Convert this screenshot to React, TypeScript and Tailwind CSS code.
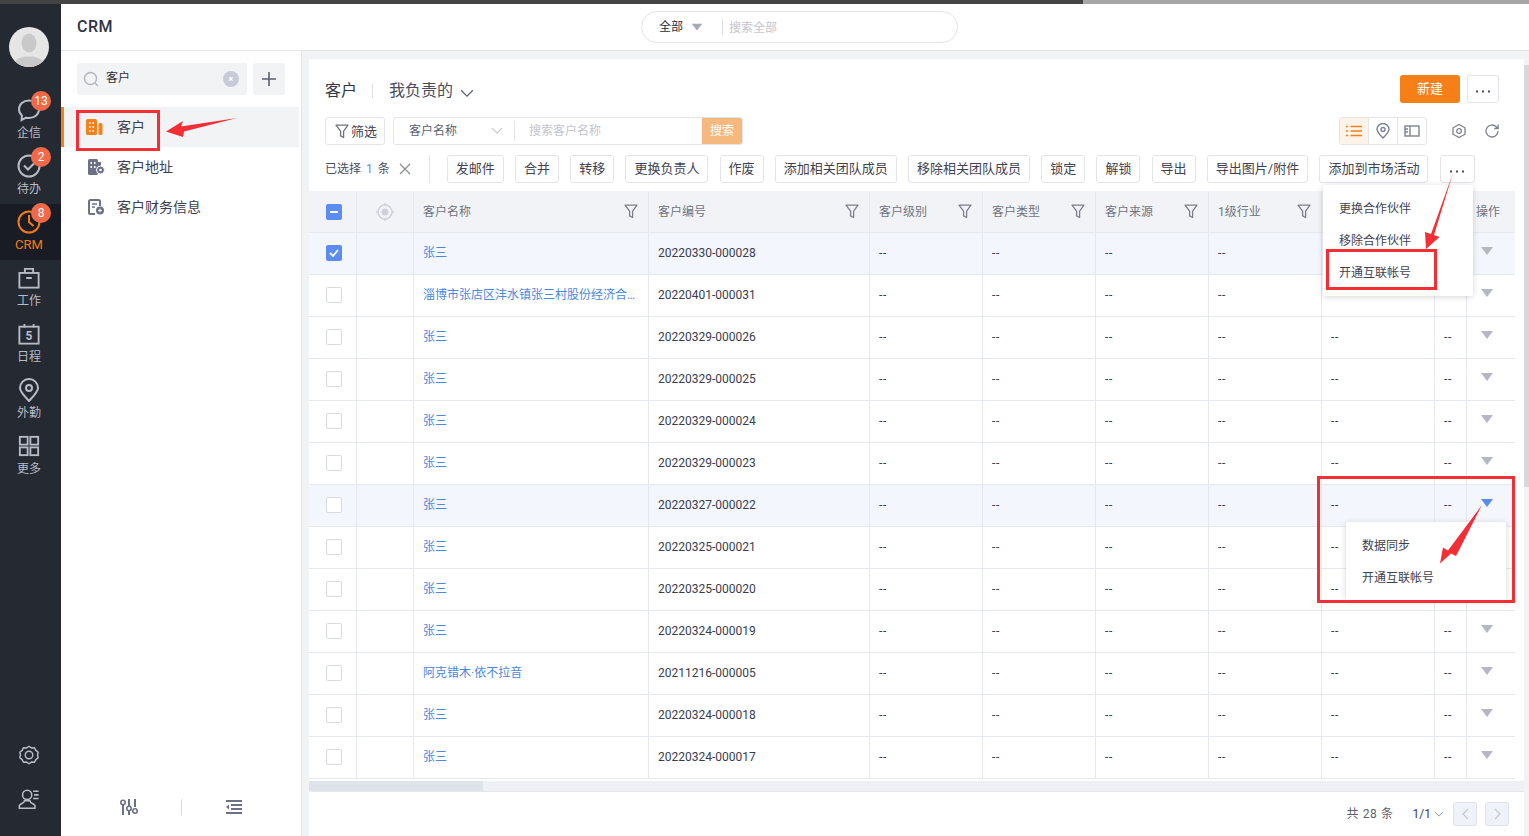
import React from "react";

const FONT = 'Roboto, "Noto Sans CJK SC", sans-serif';

function S({ size = 24, children, className = "" }: { size?: number; children: React.ReactNode; className?: string }) {
  return (
    <svg width={size} height={size} viewBox="0 0 24 24" fill="none" stroke="currentColor" strokeWidth={2} className={`shrink-0 ${className}`}>
      {children}
    </svg>
  );
}

function Filter({ className = "" }: { className?: string }) {
  return (
    <svg width="14" height="15" viewBox="0 0 14 15" fill="none" stroke="currentColor" strokeWidth="1.300" strokeLinejoin="round" className={`shrink-0 ${className}`}>
      <path d="M1 1.200h12L8.600 7.200v6.300l-3-1.600V7.200z" />
    </svg>
  );
}

function Chevron({ w = 12, className = "" }: { w?: number; className?: string }) {
  return (
    <svg width={w} height={w * 0.6} viewBox="0 0 12 7" fill="none" stroke="currentColor" strokeWidth="1.100" className={`shrink-0 ${className}`}>
      <path d="M1 1l5 5 5-5" />
    </svg>
  );
}

function Tri({ className = "" }: { className?: string }) {
  return (
    <svg width="12" height="8" viewBox="0 0 12 8" className={`shrink-0 ${className}`}>
      <path d="M0 0h12L6 8z" fill="currentColor" />
    </svg>
  );
}

function Dots() {
  return (
    <svg width="14" height="3" viewBox="0 0 14 3" fill="#4a4d5e" className="mt-[5px]">
      <rect x="0" y="0.500" width="2" height="2" />
      <rect x="6" y="0.500" width="2" height="2" />
      <rect x="12" y="0.500" width="2" height="2" />
    </svg>
  );
}

const navs: { label: string; badge?: string; icon: React.ReactNode; active?: boolean }[] = [
  {
    label: "企信",
    badge: "13",
    icon: (
      <S>
        <path d="M12 2.500c5.800 0 10 3.900 10 8.800s-4.200 8.800-10 8.800c-1 0-2-.1-2.900-.4L4.600 22l.3-4.600C3 15.800 2 13.700 2 11.300 2 6.400 6.200 2.500 12 2.500z" />
      </S>
    ),
  },
  {
    label: "待办",
    badge: "2",
    icon: (
      <S>
        <circle cx="12" cy="12" r="10.500" />
        <path d="M7 11.500l4 4 6-6" />
      </S>
    ),
  },
  {
    label: "CRM",
    badge: "8",
    active: true,
    icon: (
      <S>
        <circle cx="12" cy="12" r="10.500" />
        <path d="M12 5v7l4.500 4" />
      </S>
    ),
  },
  {
    label: "工作",
    icon: (
      <S size={22}>
        <rect x="1.500" y="6.500" width="21" height="16" />
        <path d="M7.500 6.500V2h9v4.500M9 12h6" />
      </S>
    ),
  },
  {
    label: "日程",
    icon: (
      <S size={22}>
        <rect x="1.500" y="4" width="21" height="18.500" />
        <path d="M7 1v4M17 1v4" />
        <text x="12" y="18.500" fontSize="13" fontWeight="700" fill="currentColor" stroke="none" textAnchor="middle">5</text>
      </S>
    ),
  },
  {
    label: "外勤",
    icon: (
      <S>
        <path d="M12 23C6.500 17 3 13.800 3 10a9 9 0 0118 0c0 3.800-3.500 7-9 13z" />
        <circle cx="12" cy="10" r="3" />
      </S>
    ),
  },
  {
    label: "更多",
    icon: (
      <S size={22}>
        <rect x="2" y="2" width="8.500" height="8.500" />
        <rect x="13.500" y="2" width="8.500" height="8.500" />
        <rect x="2" y="13.500" width="8.500" height="8.500" />
        <rect x="13.500" y="13.500" width="8.500" height="8.500" />
      </S>
    ),
  },
];

function NavRail() {
  return (
    <div className="flex w-[61px] shrink-0 flex-col items-center bg-[#252932]">
      <div className="mt-[23px] mb-[25px] mr-[3px] h-10 w-10 overflow-hidden rounded-full bg-[#e6e6e6]">
        <svg viewBox="0 0 40 40" width="40" height="40">
          <ellipse cx="20" cy="16" rx="7.500" ry="9.500" fill="#c9c9c9" />
          <path d="M3 40c1-8 8-8.500 12-10.500h10c4 2 11 2.500 12 10.500z" fill="#c9c9c9" />
        </svg>
      </div>
      {navs.map((n) => (
        <div
          key={n.label}
          className={`relative flex h-14 w-full flex-col items-center pr-[3px] pt-[6px] leading-[16px] ${n.active ? "bg-[#191c24] text-[13px] text-[#f47a12]" : "text-[12px] text-[#b8bcc6]"}`}
        >
          <span className="flex h-6 items-center">{n.icon}</span>
          <span className="mt-[3px]">{n.label}</span>
          {n.badge && (
            <span className="absolute left-[31px] top-[-1px] flex h-5 w-5 items-center justify-center rounded-full bg-[#f2694a] text-[12px] text-white">
              {n.badge}
            </span>
          )}
        </div>
      ))}
      <div className="mt-auto mr-[3px] flex flex-col items-center gap-[23px] pb-[26px] text-[#b8bcc6]">
        <S size={20}>
          <path d="M12 1.500l3 2 3.500-.2 1.800 3.200 2.700 2.200-.8 3.300.8 3.300-2.700 2.200-1.800 3.200-3.500-.2-3 2-3-2-3.500.2-1.800-3.200L1 15.300 1.800 12 1 8.700l2.700-2.200 1.800-3.200L9 3.500z" strokeWidth="1.700" />
          <circle cx="12" cy="12" r="4.500" strokeWidth="1.700" />
        </S>
        <S size={22}>
          <circle cx="10" cy="7.500" r="5" strokeWidth="1.700" />
          <path d="M1.500 22v-3c2-2.500 5-2 5.500-5h6c.5 3 3.500 2.500 5.500 5v3z" strokeWidth="1.700" />
          <path d="M16.500 3.500h6M17.500 7.500h5M16.500 11.500h6" strokeWidth="1.700" />
        </S>
      </div>
    </div>
  );
}

function Sidebar() {
  return (
    <div className="flex w-[241px] shrink-0 flex-col border-r border-[#e3e5ea] bg-white">
      <div className="flex items-center gap-[6px] pt-[12px] pl-4">
        <div className="flex h-8 w-[170px] items-center rounded-[3px] bg-[#f2f3f5] pl-[6px] pr-2">
          <svg width="16" height="16" viewBox="0 0 16 16" fill="none" stroke="#b4b7c2" strokeWidth="1.500">
            <circle cx="7.500" cy="7.500" r="6" />
            <path d="M12 12l3 3" />
          </svg>
          <span className="ml-[7px] mt-[-3px] text-[12px] text-[#2b2e3b]">客户</span>
          <span className="ml-auto flex h-4 w-4 items-center justify-center rounded-full bg-[#c5cbd9] text-[9px] leading-none font-bold text-white">×</span>
        </div>
        <div className="flex h-8 w-8 items-center justify-center rounded-[3px] bg-[#f2f3f5]">
          <svg width="16" height="16" viewBox="0 0 16 16" stroke="#5a5e70" strokeWidth="1.600">
            <path d="M8 1v14M1 8h14" />
          </svg>
        </div>
      </div>
      <div className="mt-3 flex h-10 w-[238px] items-center border-l-[3px] border-[#f6811a] bg-[#f2f3f5] pl-[22px] text-[14px] text-[#3b3e4e]">
        <svg width="17" height="16" viewBox="0 0 17 16" className="shrink-0">
          <rect x="0" y="0" width="11" height="16" rx="1.500" fill="#f6811a" />
          <rect x="12.500" y="4" width="4" height="12" rx="1.500" fill="#f6811a" />
          <path d="M3 3h1.500v2H3zM6.500 3H8v2H6.500zM3 7h1.500v2H3zM6.500 7H8v2H6.500zM3 11h1.500v2H3zM6.500 11H8v2H6.500z" fill="#fff" />
        </svg>
        <span className="ml-[14px] mt-[1px]">客户</span>
      </div>
      <div className="flex h-10 items-center pl-[27px] text-[14px] text-[#3b3e4e]">
        <svg width="17" height="16" viewBox="0 0 17 16" className="shrink-0">
          <rect x="0" y="0" width="10" height="16" rx="1.500" fill="#6d7186" />
          <path d="M2.500 3H4v2H2.500zM6 3h1.500v2H6zM2.500 7H4v2H2.500zM6 7h1.500v2H6z" fill="#fff" />
          <rect x="9" y="3" width="4" height="6" fill="#6d7186" />
          <circle cx="12.500" cy="11" r="4" fill="#6d7186" stroke="#fff" />
          <circle cx="12.500" cy="11" r="1.300" fill="#fff" />
        </svg>
        <span className="ml-[12px]">客户地址</span>
      </div>
      <div className="flex h-10 items-center pl-[27px] text-[14px] text-[#3b3e4e]">
        <svg width="17" height="16" viewBox="0 0 17 16" fill="none" className="shrink-0">
          <path d="M7 15H2.500A1.500 1.500 0 011 13.500v-11A1.500 1.500 0 012.500 1h8A1.500 1.500 0 0112 2.500V7" stroke="#6d7186" strokeWidth="2" />
          <path d="M4 5h5M4 8h3" stroke="#6d7186" strokeWidth="1.500" />
          <circle cx="12" cy="11.500" r="4" fill="#6d7186" />
          <path d="M10 11.500h4M12 9.500v4" stroke="#fff" />
        </svg>
        <span className="ml-[12px]">客户财务信息</span>
      </div>
      <div className="mt-auto flex items-center pb-[21px] pl-[59px] text-[#6d7186]">
        <svg width="18" height="16" viewBox="0 0 18 16" fill="none" stroke="currentColor" strokeWidth="2">
          <path d="M3 6v10M9 0v7M9 12v4M15 0v8" />
          <circle cx="3" cy="3.500" r="2.200" strokeWidth="1.600" />
          <circle cx="9" cy="9.500" r="2.200" strokeWidth="1.600" />
          <circle cx="15" cy="12" r="2.200" strokeWidth="1.600" />
        </svg>
        <span className="ml-[43px] h-4 w-px bg-[#d9dbe0]" />
        <svg width="16" height="14" viewBox="0 0 16 14" fill="currentColor" className="ml-[44px]">
          <path d="M0 0h16v2H0zM5 4h11v2H5zM5 8h11v2H5zM0 12h16v2H0zM3 4.500v5L0 7z" />
        </svg>
      </div>
    </div>
  );
}

const actions = ["发邮件", "合并", "转移", "更换负责人", "作废", "添加相关团队成员", "移除相关团队成员", "锁定", "解锁", "导出", "导出图片/附件", "添加到市场活动"];

const rows = [
  ["张三", "20220330-000028"],
  ["淄博市张店区沣水镇张三村股份经济合作社", "20220401-000031"],
  ["张三", "20220329-000026"],
  ["张三", "20220329-000025"],
  ["张三", "20220329-000024"],
  ["张三", "20220329-000023"],
  ["张三", "20220327-000022"],
  ["张三", "20220325-000021"],
  ["张三", "20220325-000020"],
  ["张三", "20220324-000019"],
  ["阿克错木·依不拉音", "20211216-000005"],
  ["张三", "20220324-000018"],
  ["张三", "20220324-000017"],
];

const widths = [48, 57, 235, 221, 113, 113, 113, 113, 113, 32, 48];
const heads = ["客户名称", "客户编号", "客户级别", "客户类型", "客户来源", "1级行业", "", ""];

function Table() {
  const th = "border-r border-b border-[#e6e8f0] bg-[#f1f3f6] px-[9px] text-left font-normal text-[#70737f]";
  const td = "border-r border-b border-[#e6e8f0] px-[9px] pb-[2px]";
  return (
    <table className="w-[1206px] table-fixed border-separate border-spacing-0 text-[12px] text-[#3a3d4d]">
      <colgroup>
        {widths.map((w, i) => (
          <col key={i} style={{ width: w }} />
        ))}
      </colgroup>
      <thead>
        <tr className="h-[42px]">
          <th className={th}>
            <span className="ml-[8px] flex h-4 w-4 items-center justify-center rounded-[2px] bg-[#5d8cf0]">
              <span className="h-[2px] w-2 bg-white" />
            </span>
          </th>
          <th className={th}>
            <svg width="18" height="18" viewBox="0 0 18 18" fill="none" className="mx-auto">
              <circle cx="9" cy="9" r="7" stroke="#ced1d8" strokeWidth="1.500" />
              <circle cx="9" cy="9" r="3.500" fill="#ced1d8" />
              <path d="M9 0v2M9 16v2M0 9h2M16 9h2" stroke="#ced1d8" strokeWidth="1.500" />
            </svg>
          </th>
          {heads.map((h, i) => (
            <th key={i} className={th}>
              <div className="flex items-center justify-between pr-[1px]">
                <span>{h}</span>
                {i < 6 && <Filter className="text-[#7d808d]" />}
              </div>
            </th>
          ))}
          <th className={`${th} border-r-0`}>操作</th>
        </tr>
      </thead>
      <tbody>
        {rows.map(([name, no], r) => {
          const bg = r === 0 || r === 6 ? "bg-[#f3f6fd]" : "bg-white";
          return (
            <tr key={no} className="h-[42px]">
              <td className={`${td} ${bg}`}>
                {r === 0 ? (
                  <span className="ml-[8px] flex h-4 w-4 items-center justify-center rounded-[2px] bg-[#5d8cf0]">
                    <svg width="10" height="8" viewBox="0 0 10 8" fill="none" stroke="#fff" strokeWidth="1.800">
                      <path d="M1 4l3 3 5-6" />
                    </svg>
                  </span>
                ) : (
                  <span className="ml-[8px] block h-4 w-4 rounded-[2px] border border-[#d7dae2] bg-white" />
                )}
              </td>
              <td className={`${td} ${bg}`} />
              <td className={`${td} ${bg} truncate text-[#4a87e0]`}>{name}</td>
              <td className={`${td} ${bg}`}>{no}</td>
              {[0, 1, 2, 3, 4, 5].map((c) => (
                <td key={c} className={`${td} ${bg} tracking-[0.8px]`}>
                  --
                </td>
              ))}
              <td className={`${td} ${bg} border-r-0`}>
                <Tri className={`ml-[5px] mt-[-3px] ${r === 6 ? "text-[#5a8cec]" : "text-[#b5b7c2]"}`} />
              </td>
            </tr>
          );
        })}
      </tbody>
    </table>
  );
}

function Content() {
  const btn = "flex h-7 items-center justify-center rounded-[3px] border border-[#e2e4ea] bg-white text-[13px] text-[#3f4252]";
  return (
    <div className="ml-[7px] mt-2 flex w-[1215px] shrink-0 flex-col bg-white">
      <div className="flex h-[58px] shrink-0 items-center pl-4 pr-[25px] pt-[3px]">
        <span className="mt-[3px] text-[16px] text-[#33364a]">客户</span>
        <span className="ml-[15px] mr-4 mt-[3px] h-[14px] w-px bg-[#dcdee3]" />
        <span className="mt-[3px] text-[16px] text-[#4a4d5e]">我负责的</span>
        <Chevron w={14} className="ml-[7px] mt-[7px] text-[#5f6272]" />
        <span className="ml-auto mt-[-1px] flex h-7 w-[60px] items-center justify-center rounded-[3px] bg-[#f67f17] text-[13px] text-white">新建</span>
        <span className={`${btn} ml-[7px] mt-[-1px] w-[32px]`}>
          <Dots />
        </span>
      </div>
      <div className="flex h-7 shrink-0 items-center pl-4 pr-[24px]">
        <span className={`${btn} w-[60px] gap-[2px] pl-[2px]`}>
          <Filter className="text-[#70737f]" />
          <span className="mt-[1px]">筛选</span>
        </span>
        <div className="ml-2 flex h-7 w-[350px] items-center overflow-hidden rounded-[3px] border border-[#e2e4ea] text-[12px]">
          <span className="ml-[15px] text-[#5c5f6e]">客户名称</span>
          <Chevron className="ml-[34px] text-[#c2c4cc]" />
          <span className="ml-[11px] h-[20px] w-px bg-[#e2e4ea]" />
          <span className="ml-[14px] text-[#c3c5cd]">搜索客户名称</span>
          <span className="ml-auto flex h-full w-[40px] items-center justify-center bg-[#f5b97f] text-white">搜索</span>
        </div>
        <div className="ml-auto flex h-7 w-[88px] items-center overflow-hidden rounded-[3px] border border-[#e2e4ea]">
          <span className="flex h-full w-[29px] items-center justify-center border-r border-[#e2e4ea] bg-[#fef3e9]">
            <svg width="16" height="12" viewBox="0 0 16 12" fill="none" stroke="#f6811a" strokeWidth="1.400">
              <path d="M0 1.500h2M4.500 1.500H16M0 6h2M4.500 6H16M0 10.500h2M4.500 10.500H16" />
            </svg>
          </span>
          <span className="flex h-full w-[29px] items-center justify-center border-r border-[#e2e4ea]">
            <svg width="14" height="16" viewBox="0 0 14 16" fill="none" stroke="#7f8290" strokeWidth="1.400">
              <path d="M7 15C3 11 1 9 1 6.500a6 6 0 0112 0C13 9 11 11 7 15z" />
              <circle cx="7" cy="6.500" r="2" />
            </svg>
          </span>
          <span className="flex h-full flex-1 items-center justify-center">
            <svg width="16" height="12" viewBox="0 0 16 12" fill="none" stroke="#7f8290" strokeWidth="1.400">
              <rect x="1" y="1" width="14" height="10" />
              <path d="M6 1v10M1 4h3M1 7h3" />
            </svg>
          </span>
        </div>
        <svg width="16" height="16" viewBox="0 0 16 16" fill="none" stroke="#7f8290" strokeWidth="1.300" className="ml-[24px]">
          <path d="M8 1.500l6 3.300v6.400l-6 3.300-6-3.300V4.800z" />
          <circle cx="8" cy="8" r="2.300" />
        </svg>
        <svg width="16" height="16" viewBox="0 0 16 16" fill="none" stroke="#7f8290" strokeWidth="1.300" className="ml-[17px]">
          <path d="M14 8a6 6 0 11-1.800-4.300L14 5.500M14.200 1.500v4h-4" />
        </svg>
      </div>
      <div className="mt-[10px] flex h-7 shrink-0 items-center pl-4 text-[12px] text-[#4a4d5e]">
        <span>已选择</span>
        <span className="ml-[5px] text-[#5d8cf0]">1</span>
        <span className="ml-[5px]">条</span>
        <svg width="12" height="12" viewBox="0 0 12 12" stroke="#8a8d99" strokeWidth="1.300" className="ml-[9px]">
          <path d="M1 1l10 10M11 1L1 11" />
        </svg>
        <span className="ml-[18px] mr-[17px] h-7 w-px bg-[#e2e4ea]" />
        <div className="flex gap-[11.200px]">
          {actions.map((a) => (
            <span key={a} className={`${btn} px-2`}>
              {a}
            </span>
          ))}
          <span className={`${btn} w-[35px]`}>
            <Dots />
          </span>
        </div>
      </div>
      <div className="mt-2 shrink-0 overflow-hidden">
        <Table />
      </div>
      <div className="mt-[2px] h-[10px] shrink-0 bg-[#eef0f5]">
        <div className="h-full w-[174px] bg-[#dfe3ea]" />
      </div>
      <div className="flex flex-1 items-center justify-end border-t border-[#e6e8f0] pr-[15px] text-[12px]">
        <span className="tracking-[0.6px] text-[#5c5f6e]">共 28 条</span>
        <span className="ml-[19px] text-[#3a3d5a]">1/1</span>
        <Chevron w={10} className="ml-[3px] text-[#7f93b5]" />
        <span className="ml-[9px] flex h-6 w-6 items-center justify-center rounded-[3px] border border-[#e0e3ea] bg-[#f0f2f9]">
          <svg width="7" height="12" viewBox="0 0 7 12" fill="none" stroke="#c3c6d0" strokeWidth="1.100"><path d="M6 1L1 6l5 5" /></svg>
        </span>
        <span className="ml-2 flex h-6 w-6 items-center justify-center rounded-[3px] border border-[#e0e3ea] bg-[#f0f2f9]">
          <svg width="7" height="12" viewBox="0 0 7 12" fill="none" stroke="#c3c6d0" strokeWidth="1.100"><path d="M1 1l5 5-5 5" /></svg>
        </span>
      </div>
    </div>
  );
}

function Overlays() {
  const menu = "absolute flex flex-col bg-white text-[12px] text-[#3f4252] shadow-[0_1px_6px_rgba(0,0,0,0.16)] rounded-[2px]";
  const red = "absolute border-[3px] border-[#f32f35]";
  return (
    <>
      <div className={`${menu} left-[1323px] top-[185px] h-[111px] w-[150px] pl-4 pt-[8px]`}>
        <span className="flex h-8 items-center">更换合作伙伴</span>
        <span className="flex h-8 items-center">移除合作伙伴</span>
        <span className="flex h-8 items-center">开通互联帐号</span>
      </div>
      <div className={`${menu} left-[1346px] top-[522px] h-[78px] w-[160px] pl-4 pt-[8px]`}>
        <span className="flex h-8 items-center">数据同步</span>
        <span className="flex h-8 items-center">开通互联帐号</span>
      </div>
      <div className={`${red} left-[76px] top-[110px] h-[41px] w-[84px]`} />
      <div className={`${red} left-[1326px] top-[249px] h-[41px] w-[111px]`} />
      <div className={`${red} left-[1317px] top-[476px] h-[127px] w-[198px]`} />
      <svg width="1529" height="836" viewBox="0 0 1529 836" className="pointer-events-none absolute left-0 top-0">
        <path d="M166 131.500L183 121l-2 5.500L237 118 184 131.500 183 137z" fill="#f32f35" />
        <path d="M1453 173L1434 235l5.500 2L1426 249l-1-17 6 2z" fill="#f32f35" />
        <path d="M1482 505L1456 556l-5-2.500-11 10 3-16 5 3z" fill="#f32f35" />
      </svg>
    </>
  );
}

export default function App() {
  return (
    <div className="relative flex h-[836px] w-[1529px] flex-col overflow-hidden bg-[#f2f3f5]" style={{ fontFamily: FONT }}>
      <div className="flex h-1 shrink-0">
        <div className="w-[1083px] bg-[#444444]" />
        <div className="flex-1 bg-[#a6a6a6]" />
      </div>
      <div className="flex min-h-0 flex-1">
        <NavRail />
        <div className="flex min-w-0 flex-1 flex-col">
          <div className="flex h-[47px] shrink-0 items-center border-b border-[#e3e5ea] bg-white pl-4">
            <span className="w-[36px] text-[16px] font-medium tracking-[0.5px] text-[#2f3347]">CRM</span>
            <div className="ml-[528px] flex h-8 w-[317px] items-center rounded-full border border-[#e2e4ea] bg-white pl-[17px] text-[12px]">
              <span className="mt-[-1px] text-[#2b2e3b]">全部</span>
              <Tri className="ml-[8px] scale-90 text-[#a6a8b2]" />
              <span className="ml-[19px] h-[16px] w-px bg-[#dcdee3]" />
              <span className="ml-[6px] mt-[1px] text-[#c3c5cd]">搜索全部</span>
            </div>
          </div>
          <div className="flex min-h-0 flex-1">
            <Sidebar />
            <Content />
            <div className="flex-1 pt-[14px]">
              <div className="h-[422px] w-full bg-[#d7d8db]" />
            </div>
          </div>
        </div>
      </div>
      <Overlays />
    </div>
  );
}
